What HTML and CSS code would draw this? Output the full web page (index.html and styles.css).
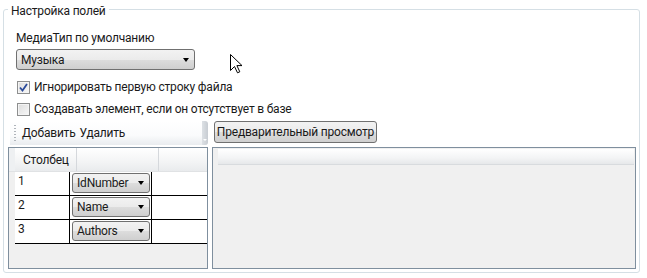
FILE: index.html
```html
<!DOCTYPE html>
<html lang="ru">
<head>
  <meta charset="UTF-8" />
  <title>Настройка полей</title>
  <link rel="stylesheet" href="styles.css">
</head>
<body>

  <fieldset class="group">
    <legend>Настройка полей</legend>

    <div class="settings">
      <div class="caption">МедиаТип по умолчанию</div>
      <div class="combo combo-main">
        <span>Музыка</span>
        <i class="arrow"></i>
      </div>

      <label class="check">
        <span class="box">
          <svg viewBox="0 0 9 9"><path d="M1 4.5 L3.5 7.5 L8 1"/></svg>
        </span>
        Игнорировать первую строку файла
      </label>
      <label class="check">
        <span class="box"></span>
        Создавать элемент, если он отсутствует в базе
      </label>
    </div>

    <div class="actions">
      <div class="toolbar">
        <span class="grip"></span>
        <span class="tool">Добавить</span>
        <span class="tool">Удалить</span>
        <span class="overflow"><i></i></span>
      </div>
      <button class="btn">Предварительный просмотр</button>
    </div>

    <div class="panes">
      <div class="grid">
        <div class="grid-head">
          <div class="corner"></div>
          <div class="head-cell head-first">Столбец</div>
          <div class="head-cell head-second"></div>
          <div class="head-fill"></div>
        </div>

        <div class="row">
          <div class="row-head"></div>
          <div class="cell cell-num">1</div>
          <div class="cell cell-field">
            <div class="combo combo-small"><span>IdNumber</span><i class="arrow"></i></div>
          </div>
          <div class="cell cell-rest"></div>
        </div>
        <div class="row">
          <div class="row-head"></div>
          <div class="cell cell-num">2</div>
          <div class="cell cell-field">
            <div class="combo combo-small"><span>Name</span><i class="arrow"></i></div>
          </div>
          <div class="cell cell-rest"></div>
        </div>
        <div class="row">
          <div class="row-head"></div>
          <div class="cell cell-num">3</div>
          <div class="cell cell-field">
            <div class="combo combo-small"><span>Authors</span><i class="arrow"></i></div>
          </div>
          <div class="cell cell-rest"></div>
        </div>
      </div>

      <div class="preview">
        <div class="preview-head"></div>
      </div>
    </div>
  </fieldset>

  <!-- mouse pointer left on the screen -->
  <svg class="cursor" viewBox="0 0 13 20">
    <path d="M0.5 0.5 L0.5 16.5 L4.5 12.5 L7.5 18.8 L9.8 17.8 L6.9 11.6 L12 11.6 Z"/>
  </svg>

</body>
</html>
```

FILE: styles.css
```css
body {
  margin: 0;
  background: #ffffff;
  font-family: Roboto, "Open Sans", sans-serif;
  font-size: 12px;
  letter-spacing: -0.2px;
  line-height: 16px;
  color: #1a1a1a;
  width: 647px;
  height: 278px;
  overflow: hidden;
  position: relative;
}

.group {
  margin: 0 0 0 3px;
  padding: 0 3px 3px 4px;
  box-sizing: border-box;
  width: 637px;
  border: 1px solid #d5dfe5;
  border-radius: 3px;
}

.group legend {
  margin-left: 0;
  padding: 3px 3px 0 3px;
  line-height: 16px;
}

.settings {
  padding: 11px 0 0 8px;
  display: flex;
  flex-direction: column;
  align-items: flex-start;
}

.caption {
  height: 16px;
}

/* combobox in Windows 7 style */
.combo {
  display: flex;
  align-items: center;
  justify-content: space-between;
  box-sizing: border-box;
  border: 1px solid #707070;
  border-radius: 3px;
  background: linear-gradient(#f2f2f2 0%, #ebebeb 50%, #dddddd 51%, #cfcfcf 100%);
}

.combo-main {
  margin-top: 3px;
  width: 179px;
  height: 21px;
  padding: 0 5px 0 4px;
}

.combo-small {
  width: 78px;
  height: 20px;
  padding: 0 5px 0 4px;
}

.arrow {
  width: 0;
  height: 0;
  border-left: 3.5px solid transparent;
  border-right: 3.5px solid transparent;
  border-top: 4px solid #000000;
}

.check {
  display: flex;
  align-items: center;
  gap: 4px;
  height: 22px;
  margin-left: 1px;
}

.check:first-of-type {
  margin-top: 6px;
}

.box {
  width: 13px;
  height: 13px;
  box-sizing: border-box;
  border: 1px solid #8e8f8f;
  background: linear-gradient(135deg, #dcdcdc, #f8f8f8);
  box-shadow: inset 0 0 0 1px #f4f4f4;
  display: flex;
  align-items: center;
  justify-content: center;
}

.box svg {
  width: 9px;
  height: 9px;
  fill: none;
  stroke: #2a4a9a;
  stroke-width: 1.8;
}

.actions {
  display: flex;
  align-items: flex-start;
  margin-top: 1px;
}

.toolbar {
  margin-left: 2px;
  width: 198px;
  height: 24px;
  box-sizing: border-box;
  display: flex;
  align-items: center;
  background: linear-gradient(#ffffff 0%, #fafbfc 60%, #e9ecef 100%);
  border-radius: 0 3px 3px 0;
}

.grip {
  width: 2px;
  height: 16px;
  margin: 0 6px 0 4px;
  background: repeating-linear-gradient(#b0b5bb 0 1px, transparent 1px 3px);
}

.tool {
  margin-right: 4px;
}

.overflow {
  margin-left: auto;
  width: 6px;
  height: 24px;
  border-radius: 0 3px 3px 0;
  background: linear-gradient(90deg, #dde1e5, #c7ccd2);
  display: flex;
  align-items: flex-end;
  justify-content: center;
}

.overflow i {
  width: 0;
  height: 0;
  margin-bottom: 4px;
  border-left: 2px solid transparent;
  border-right: 2px solid transparent;
  border-top: 2px solid #ffffff;
}

.btn {
  margin-left: 6px;
  width: 163px;
  height: 22px;
  padding: 0;
  white-space: nowrap;
  border: 1px solid #707070;
  border-radius: 3px;
  background: linear-gradient(#f2f2f2 0%, #ebebeb 50%, #dddddd 51%, #cfcfcf 100%);
  font: inherit;
  letter-spacing: inherit;
  color: inherit;
}

.panes {
  display: flex;
  gap: 4px;
  margin-top: 2px;
}

.grid,
.preview {
  height: 122px;
  box-sizing: border-box;
  border: 1px solid #7f8f9e;
  background: #f0f0f0;
}

.grid {
  width: 200px;
}

.preview {
  width: 424px;
  padding: 1px 1px 0 5px;
}

.preview-head {
  height: 15px;
  background: linear-gradient(#ffffff, #f3f4f5 60%, #e6e8ea);
  border-bottom: 1px solid #d8dbde;
}

.grid-head {
  display: flex;
  height: 24px;
  background: linear-gradient(#ffffff, #f3f4f5 60%, #e9ebed);
  border-bottom: 1px solid #e0e2e4;
  box-sizing: border-box;
}

.corner {
  width: 6px;
  background: #eef0f2;
}

.head-cell {
  border-right: 1px solid #d5d8dc;
  display: flex;
  align-items: center;
}

.head-first {
  width: 62px;
  padding-left: 8px;
  box-sizing: border-box;
}

.head-second {
  width: 81px;
}

.head-fill {
  flex: 1;
}

.row {
  display: flex;
  height: 24px;
}

.row-head {
  width: 6px;
  background: #f0f0f0;
}

.cell {
  background: #ffffff;
  border-bottom: 1px solid #000000;
  box-sizing: border-box;
}

.cell-num {
  width: 55px;
  padding: 1px 0 0 3px;
  border-right: 1px solid #000000;
}

.cell-field {
  width: 82px;
  padding: 1px 0 0 2px;
  border-right: 1px solid #000000;
}

.cell-rest {
  flex: 1;
}

.cursor {
  position: absolute;
  left: 230px;
  top: 54px;
  width: 13px;
  height: 20px;
}

.cursor path {
  fill: #ffffff;
  stroke: #000000;
  stroke-width: 1;
}
```
